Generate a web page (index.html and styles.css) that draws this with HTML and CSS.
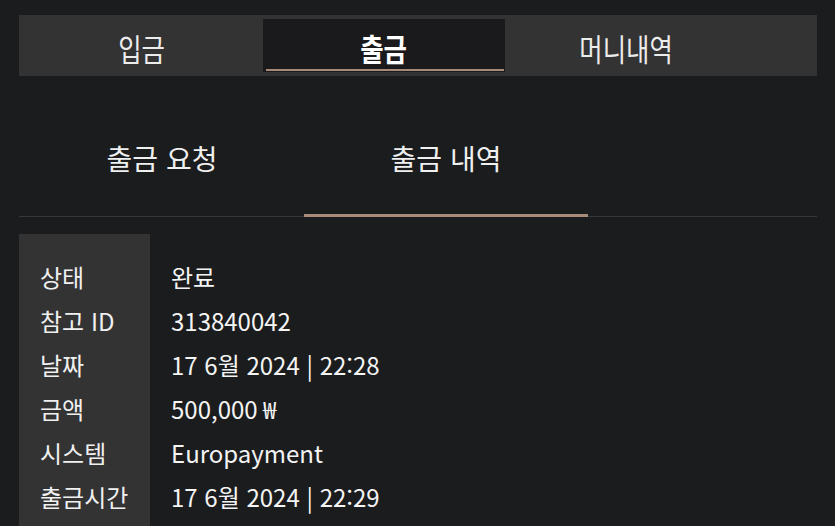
FILE: index.html
```html
<!DOCTYPE html>
<html lang="ko">
<head>
<meta charset="utf-8">
<title>출금 내역</title>
<link rel="stylesheet" href="styles.css">
</head>
<body>
<div class="page">
  <nav class="topbar">
    <div class="tab"><span>입금</span></div>
    <div class="tab active"><span>출금</span></div>
    <div class="tab"><span>머니내역</span></div>
  </nav>
  <nav class="subnav">
    <div class="subtab">출금 요청</div>
    <div class="subtab active">출금 내역</div>
  </nav>
  <div class="details">
    <div class="label">상태</div><div class="value">완료</div>
    <div class="label">참고 ID</div><div class="value">313840042</div>
    <div class="label">날짜</div><div class="value">17 6월 2024 | 22:28</div>
    <div class="label">금액</div><div class="value">500,000 ₩</div>
    <div class="label">시스템</div><div class="value">Europayment</div>
    <div class="label">출금시간</div><div class="value">17 6월 2024 | 22:29</div>
  </div>
</div>
</body>
</html>
```
FILE: styles.css
```css
html, body {
  margin: 0;
  padding: 0;
  background: #1b1c1e;
  color: #f2f2f2;
  font-family: "Noto Sans CJK KR", "Noto Sans", sans-serif;
  overflow: hidden;
}
.page {
  padding: 15px 18px 0 19px;
}
.topbar {
  display: flex;
  height: 61px;
  box-sizing: border-box;
  padding: 4px 3px 4px 2px;
  background: #333334;
}
.tab {
  width: 242px;
  height: 53px;
  display: flex;
  align-items: center;
  justify-content: center;
  position: relative;
  font-size: 31px;
  color: #ececec;
}
.tab span {
  display: inline-block;
  transform: scaleX(0.82);
  line-height: 1;
  margin-top: 3px;
}
.tab.active {
  background: #1a1a1c;
  font-weight: 700;
  color: #ffffff;
}
.tab.active::after {
  content: "";
  position: absolute;
  left: 3px;
  right: 1px;
  bottom: 1px;
  height: 2px;
  background: #a88a79;
}
.subnav {
  display: flex;
  margin-top: 28px;
  border-bottom: 1px solid #38383a;
  padding-left: 1px;
}
.subtab {
  width: 284px;
  height: 112px;
  line-height: 108px;
  text-align: center;
  font-size: 28px;
  position: relative;
  color: #f0f0f0;
}
.subtab.active::after {
  content: "";
  position: absolute;
  left: 0;
  right: 0;
  bottom: -1px;
  height: 3px;
  background: #a88a79;
}
.details {
  margin-top: 17px;
  display: grid;
  grid-template-columns: 131px 1fr;
  grid-auto-rows: 44px;
  padding: 21px 0 24px;
  background: linear-gradient(to right, #333334 131px, transparent 131px);
  font-size: 24px;
  line-height: 44px;
}
.label {
  padding-left: 21px;
  color: #f0f0f0;
}
.value {
  padding-left: 21px;
  color: #f4f4f4;
}
```
